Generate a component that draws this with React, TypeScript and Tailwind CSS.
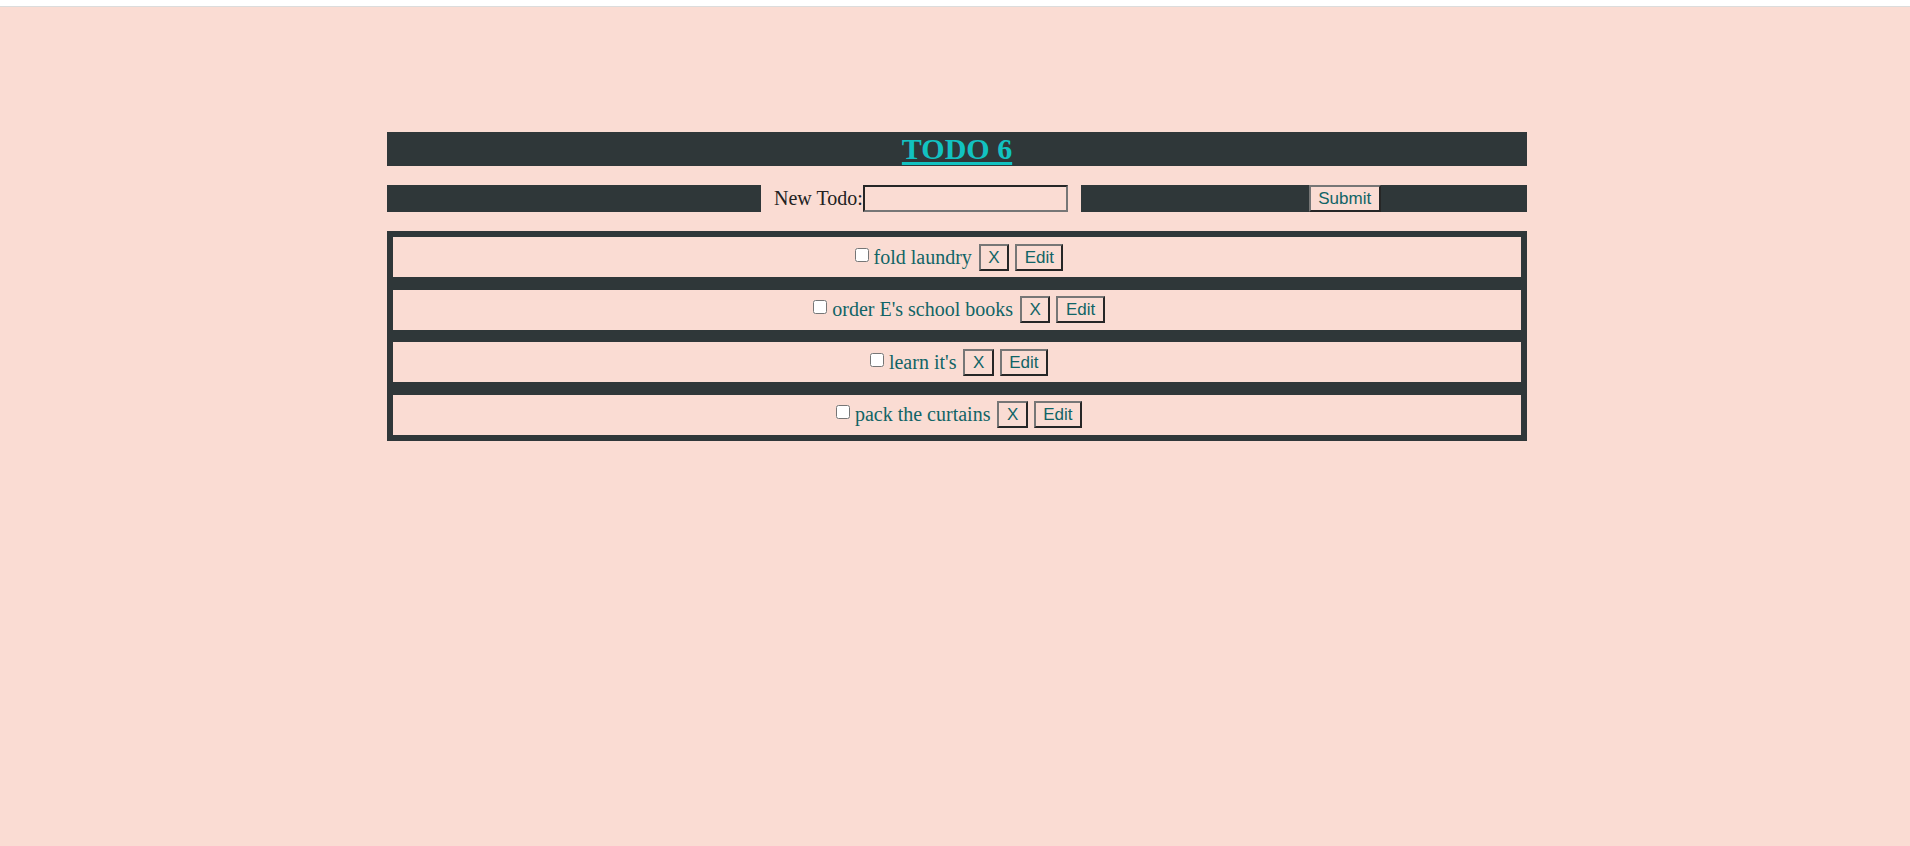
const todos = ["fold laundry", "order E's school books", "learn it's", "pack the curtains"];

const dark = "bg-[#2f3739]";

function OldButton({ label, className = "" }: { label: string; className?: string }) {
  return (
    <button
      type="button"
      className={
        "h-[27px] border-2 border-solid border-t-[#767676] border-l-[#767676] border-r-[#262626] border-b-[#262626] bg-[#fadcd3] px-[7.5px] font-['Liberation_Sans',Arial,sans-serif] text-[17px] leading-[19px] text-[#116466] " +
        className
      }
    >
      {label}
    </button>
  );
}

function TodoRow({ text }: { text: string }) {
  return (
    <li className="flex h-[40px] items-center justify-center bg-[#fadcd3]">
      <input type="checkbox" className="mb-[5px] ml-[4px] h-[14px] w-[14px]" />
      <span className="ml-[5px] mr-[7px] text-[20px] leading-[23px] text-[#116466]">{text}</span>
      <OldButton label="X" />
      <OldButton label="Edit" className="ml-[6px]" />
    </li>
  );
}

export default function App() {
  return (
    <div className="min-h-screen bg-[#fadcd3] font-['Liberation_Serif','Times_New_Roman',serif]">
      {/* top strip */}
      <div className="h-[7px] border-b border-[#dcdcdc] bg-white" />

      <div className="ml-[387px] w-[1140px] pt-[125px]">
        {/* Title */}
        <h1 className={`${dark} text-center text-[30px] font-bold leading-[34px]`}>
          <a href="#" className="text-[#12c2c1] underline decoration-[3px] underline-offset-[3px]">
            TODO 6
          </a>
        </h1>

        {/* New todo form */}
        <form className="mt-[19px] flex h-[27px]" onSubmit={(e) => e.preventDefault()}>
          <div className={`${dark} w-[374px]`} />
          <label className="ml-[13px] text-[20px] leading-[27px] text-[#222]">New Todo:</label>
          <input
            type="text"
            className="h-[27px] w-[205px] border-2 border-solid border-t-[#262626] border-l-[#262626] border-r-[#767676] border-b-[#767676] bg-transparent"
          />
          <div className={`${dark} ml-[13px] flex flex-1 pl-[228px]`}>
            <OldButton label="Submit" />
          </div>
        </form>

        {/* List */}
        <ul className={`${dark} mt-[19px] flex flex-col gap-[12.67px] border-[6px] border-[#2f3739]`}>
          {todos.map((t) => (
            <TodoRow key={t} text={t} />
          ))}
        </ul>
      </div>
    </div>
  );
}
